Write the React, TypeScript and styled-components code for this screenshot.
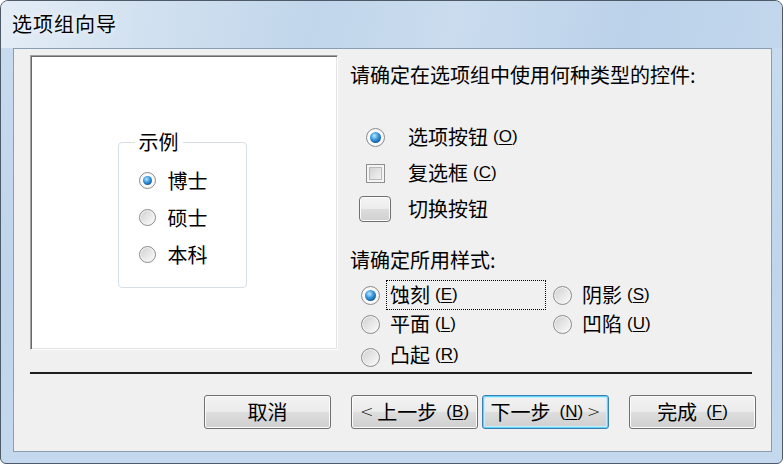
import React from 'react';
import styled, { createGlobalStyle } from 'styled-components';

const GlobalStyle = createGlobalStyle`
  html, body {
    margin: 0;
    padding: 0;
    background: #ffffff;
  }
  body {
    font-family: "Noto Sans CJK SC", "Noto Sans", sans-serif;
    color: #000;
  }
`;

const Window = styled.div`
  width: 783px;
  height: 464px;
  box-sizing: border-box;
  border: 1px solid #4f5a68;
  border-radius: 8px 8px 6px 6px;
  background: linear-gradient(180deg, #c9dcef 0%, #bfd5eb 60%, #c4d9ee 100%);
  display: flex;
  flex-direction: column;
  overflow: hidden;
`;

const TitleBar = styled.div`
  height: 47px;
  flex: none;
  display: flex;
  align-items: center;
  padding-left: 11px;
  background: linear-gradient(100deg, #e4edf6 0%, #d2e1f0 18%, #c1d6eb 40%, #cadcee 58%, #bcd2ea 80%, #c2d7ec 100%);
`;

const Title = styled.span`
  font-size: 20px;
  letter-spacing: 1px;
  line-height: 24px;
  margin-top: -2px;
  text-shadow: 0 0 6px rgba(255, 255, 255, 0.9);
`;

const Frame = styled.div`
  flex: 1;
  display: flex;
  padding: 0 10px 11px 12px;
`;

const Client = styled.div`
  flex: 1;
  box-sizing: border-box;
  background: #f0f0f0;
  border: 1px solid #8c9db1;
  padding: 6px 0 0 16px;
  display: flex;
  flex-direction: column;
`;

const Top = styled.div`
  height: 317px;
  display: flex;
  align-items: flex-start;
`;

const Preview = styled.div`
  width: 308px;
  height: 295px;
  flex: none;
  box-sizing: border-box;
  background: #ffffff;
  border: 1px solid;
  border-color: #a0a0a0 #ffffff #ffffff #a0a0a0;
  box-shadow: inset 1px 1px 0 #696969, inset -1px -1px 0 #e3e3e3;
  display: flex;
  justify-content: center;
  padding: 74px 4px 0 0;
`;

const GroupBox = styled.fieldset`
  width: 129px;
  height: 158px;
  box-sizing: border-box;
  margin: 0;
  border: 1px solid #d5dfe5;
  border-radius: 4px;
  padding: 8px 0 0 20px;
`;

const Legend = styled.legend`
  font-size: 20px;
  line-height: 24px;
  padding: 0 4px;
  margin-left: -4px;
`;

const SampleRow = styled.label`
  height: 37px;
  display: flex;
  align-items: center;
  gap: 12px;
  font-size: 20px;
  line-height: 24px;
`;

const Radio = styled.span<{ $checked?: boolean; $size?: number }>`
  flex: none;
  position: relative;
  width: ${p => p.$size ?? 18}px;
  height: ${p => p.$size ?? 18}px;
  box-sizing: border-box;
  border-radius: 50%;
  border: 1px solid #8b8b8b;
  background: ${p =>
    p.$checked
      ? '#fbfbfb'
      : 'linear-gradient(135deg, #cdcdcd 0%, #e4e4e4 45%, #fdfdfd 100%)'};
  box-shadow: inset 0 0 0 1px #f6f6f6;

  &::after {
    content: '';
    display: ${p => (p.$checked ? 'block' : 'none')};
    position: absolute;
    inset: 3px;
    border-radius: 50%;
    background: radial-gradient(circle at 40% 35%, #bfe8ff 0%, #3d9de2 38%, #17609f 72%, #0c3d70 100%);
  }
`;

const CheckBox = styled.span`
  flex: none;
  width: 19px;
  height: 19px;
  box-sizing: border-box;
  border: 1px solid #8e8f8f;
  background: linear-gradient(135deg, #c9c9c9 0%, #e3e3e3 50%, #fafafa 100%);
  box-shadow: inset 0 0 0 2px #f4f4f4, inset 0 0 0 3px #b9b9b9;
`;

const ToggleShape = styled.span`
  flex: none;
  width: 32px;
  height: 26px;
  box-sizing: border-box;
  border: 1px solid #707070;
  border-radius: 4px;
  background: linear-gradient(180deg, #f4f4f4 0%, #ececec 48%, #dcdcdc 52%, #d0d0d0 100%);
  box-shadow: inset 0 0 0 1px #fcfcfc;
`;

const RightPanel = styled.div`
  margin-left: 12px;
  display: flex;
  flex-direction: column;
`;

const Prompt = styled.div<{ $top: number }>`
  margin-top: ${p => p.$top}px;
  font-size: 20px;
  line-height: 24px;
  white-space: nowrap;
`;

const TypeList = styled.div`
  margin-top: 32px;
  display: flex;
  flex-direction: column;
`;

const TypeRow = styled.label`
  height: 36px;
  display: flex;
  align-items: center;
  font-size: 20px;
  line-height: 24px;
`;

const IconSlot = styled.span`
  width: 50px;
  display: flex;
  justify-content: center;
  margin-right: 8px;
`;

const Key = styled.span`
  font-family: "Liberation Sans", "DejaVu Sans", sans-serif;
  font-size: 17px;
  margin-left: 5px;

  u {
    text-decoration: underline;
    text-underline-offset: 2px;
  }
`;

const StyleGrid = styled.div`
  margin: 8px 0 0 11px;
  display: grid;
  grid-template-columns: 192px auto;
  grid-template-rows: 30px 28px 34px;
`;

const StyleOption = styled.label<{ $low?: boolean }>`
  display: flex;
  align-items: center;
  gap: 6px;
  font-size: 20px;
  line-height: 24px;

  & > span:first-child {
    margin-top: ${p => (p.$low ? '4px' : '0')};
  }
`;

const StyleLabel = styled.span<{ $focused?: boolean }>`
  width: 160px;
  height: 30px;
  box-sizing: border-box;
  display: flex;
  align-items: center;
  padding: 0 3px;
  border: 1px dotted ${p => (p.$focused ? '#000' : 'transparent')};
`;

const Separator = styled.div`
  height: 2px;
  margin-right: 19px;
  background: #1e1e1e;
`;

const ButtonRow = styled.div`
  margin-top: 21px;
  padding-right: 15px;
  display: flex;
  justify-content: flex-end;
  gap: 20px;
`;

const NavGroup = styled.div`
  display: flex;
  gap: 4px;
`;

const Button = styled.button<{ $default?: boolean }>`
  width: 127px;
  height: 34px;
  box-sizing: border-box;
  padding: 0;
  border-radius: 3px;
  border: 1px solid ${p => (p.$default ? '#3c7fb1' : '#707070')};
  background: linear-gradient(180deg, #f3f3f3 0%, #ebebeb 48%, #dddddd 52%, #cfcfcf 100%);
  box-shadow: ${p =>
    p.$default ? 'inset 0 0 0 1px #5fd3f8, inset 0 0 0 2px #c8eefc' : 'inset 0 0 0 1px #fcfcfc'};
  font-family: "Noto Sans CJK SC", "Noto Sans", sans-serif;
  font-size: 20px;
  line-height: 24px;
  color: #000;
  display: flex;
  align-items: center;
  justify-content: center;
  gap: 4px;
`;

const Arrow = styled.span`
  font-family: "DejaVu Sans", sans-serif;
  font-size: 16px;
  font-weight: 300;
`;

const samples = [
  { label: '博士', checked: true },
  { label: '硕士' },
  { label: '本科' },
];

const styleOptions = [
  { label: '蚀刻', key: 'E', checked: true, focused: true },
  { label: '阴影', key: 'S' },
  { label: '平面', key: 'L' },
  { label: '凹陷', key: 'U' },
  { label: '凸起', key: 'R', low: true },
];

const Mnemonic: React.FC<{ k: string }> = ({ k }) => (
  <Key>
    (<u>{k}</u>)
  </Key>
);

const App: React.FC = () => {
  return (
    <>
      <GlobalStyle />
      <Window>
        <TitleBar>
          <Title>选项组向导</Title>
        </TitleBar>
        <Frame>
          <Client>
            <Top>
              <Preview>
                <GroupBox>
                  <Legend>示例</Legend>
                  {samples.map(s => (
                    <SampleRow key={s.label}>
                      <Radio $checked={s.checked} $size={17} />
                      {s.label}
                    </SampleRow>
                  ))}
                </GroupBox>
              </Preview>

              <RightPanel>
                <Prompt $top={8}>请确定在选项组中使用何种类型的控件:</Prompt>
                <TypeList>
                  <TypeRow>
                    <IconSlot>
                      <Radio $checked $size={19} />
                    </IconSlot>
                    选项按钮
                    <Mnemonic k="O" />
                  </TypeRow>
                  <TypeRow>
                    <IconSlot>
                      <CheckBox />
                    </IconSlot>
                    复选框
                    <Mnemonic k="C" />
                  </TypeRow>
                  <TypeRow>
                    <IconSlot>
                      <ToggleShape />
                    </IconSlot>
                    切换按钮
                  </TypeRow>
                </TypeList>

                <Prompt $top={21}>请确定所用样式:</Prompt>
                <StyleGrid>
                  {styleOptions.map(o => (
                    <StyleOption key={o.key} $low={o.low}>
                      <Radio $checked={o.checked} $size={19} />
                      <StyleLabel $focused={o.focused}>
                        {o.label}
                        <Mnemonic k={o.key} />
                      </StyleLabel>
                    </StyleOption>
                  ))}
                </StyleGrid>
              </RightPanel>
            </Top>

            <Separator />

            <ButtonRow>
              <Button>取消</Button>
              <NavGroup>
                <Button>
                  <Arrow>&lt;</Arrow>
                  上一步
                  <Mnemonic k="B" />
                </Button>
                <Button $default>
                  下一步
                  <Mnemonic k="N" />
                  <Arrow>&gt;</Arrow>
                </Button>
              </NavGroup>
              <Button>
                完成
                <Mnemonic k="F" />
              </Button>
            </ButtonRow>
          </Client>
        </Frame>
      </Window>
    </>
  );
};

export default App;
